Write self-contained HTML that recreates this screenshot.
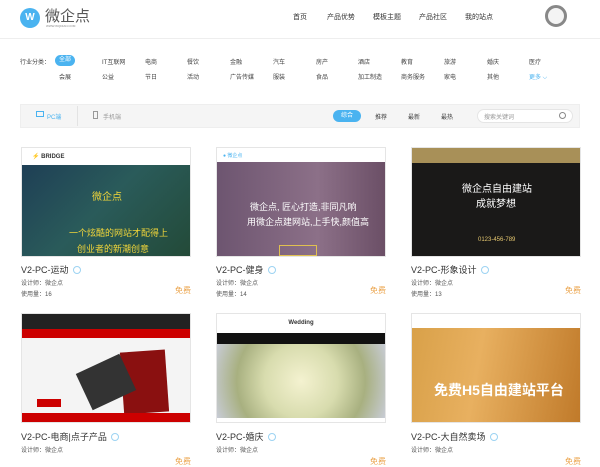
<!DOCTYPE html>
<html><head><meta charset="utf-8"><style>
*{margin:0;padding:0;box-sizing:border-box}
body{width:600px;height:454px;overflow:hidden;background:#fff;font-family:"Liberation Sans","Noto Sans CJK SC",sans-serif;color:#333;position:relative}
.a{position:absolute;white-space:nowrap}
.nav{font-size:7px;color:#333;top:12px}
.cat{font-size:6px;color:#444}
.card{position:absolute;width:170px}
.img{position:absolute;left:0;width:170px;height:110px;overflow:hidden;border:1px solid #e5e5e5}
.t{position:absolute;left:0;font-size:9px;color:#333}
.t i{display:inline-block;width:8px;height:8px;border-radius:50%;border:1px solid #9cd3f2;margin-left:4px;vertical-align:-1px}
.s{position:absolute;left:0;font-size:6px;color:#555}
.f{position:absolute;right:0;font-size:8px;color:#eba34a}
</style></head><body>
<!-- header -->
<div class="a" style="left:20px;top:8px;width:20px;height:20px;border-radius:50%;background:#4ab3f0;color:#fff;font-size:10px;font-weight:bold;text-align:center;line-height:20px">W</div>
<div class="a" style="left:45px;top:5px;font-size:15px;color:#555">微企点</div>
<div class="a" style="left:46px;top:24px;font-size:3px;color:#888">WWW.WQDIAN.COM</div>
<div class="a nav" style="left:293px">首页</div>
<div class="a nav" style="left:327px">产品优势</div>
<div class="a nav" style="left:373px">模板主题</div>
<div class="a nav" style="left:419px">产品社区</div>
<div class="a nav" style="left:465px">我的站点</div>
<div class="a" style="left:545px;top:5px;width:22px;height:22px;border-radius:50%;border:3px solid #888;background:#f4f4f4"></div>
<div class="a" style="left:0;top:38px;width:600px;height:1px;background:#eee"></div>
<!-- categories -->
<div class="a cat" style="left:20px;top:57px">行业分类：</div>
<div class="a cat" style="left:55px;top:55px;width:20px;height:11px;border-radius:6px;background:#4ab3f0;color:#fff;text-align:center;line-height:11px">全部</div>
<div class="a cat" style="left:102px;top:57px">IT互联网</div>
<div class="a cat" style="left:145px;top:57px">电商</div>
<div class="a cat" style="left:187px;top:57px">餐饮</div>
<div class="a cat" style="left:230px;top:57px">金融</div>
<div class="a cat" style="left:273px;top:57px">汽车</div>
<div class="a cat" style="left:316px;top:57px">房产</div>
<div class="a cat" style="left:358px;top:57px">酒店</div>
<div class="a cat" style="left:401px;top:57px">教育</div>
<div class="a cat" style="left:444px;top:57px">旅游</div>
<div class="a cat" style="left:487px;top:57px">婚庆</div>
<div class="a cat" style="left:529px;top:57px">医疗</div>
<div class="a cat" style="left:59px;top:72px">会展</div>
<div class="a cat" style="left:102px;top:72px">公益</div>
<div class="a cat" style="left:145px;top:72px">节日</div>
<div class="a cat" style="left:187px;top:72px">活动</div>
<div class="a cat" style="left:230px;top:72px">广告传媒</div>
<div class="a cat" style="left:273px;top:72px">服装</div>
<div class="a cat" style="left:316px;top:72px">食品</div>
<div class="a cat" style="left:358px;top:72px">加工制造</div>
<div class="a cat" style="left:401px;top:72px">商务服务</div>
<div class="a cat" style="left:444px;top:72px">家电</div>
<div class="a cat" style="left:487px;top:72px">其他</div>
<div class="a cat" style="left:529px;top:72px;color:#4ab3f0">更多 ⌵</div>
<!-- toolbar -->
<div class="a" style="left:20px;top:104px;width:560px;height:24px;background:#f5f5f5;border:1px solid #eee"></div>
<div class="a" style="left:36px;top:111px;width:8px;height:6px;border:1px solid #4ab3f0"></div>
<div class="a cat" style="left:47px;top:112px;color:#4ab3f0">PC端</div>
<div class="a" style="left:77px;top:106px;width:1px;height:20px;background:#e3e3e3"></div>
<div class="a" style="left:93px;top:111px;width:5px;height:8px;border:1px solid #999"></div>
<div class="a cat" style="left:103px;top:112px;color:#999">手机端</div>
<div class="a cat" style="left:333px;top:110px;width:28px;height:12px;border-radius:6px;background:#4ab3f0;color:#fff;text-align:center;line-height:12px">综合</div>
<div class="a cat" style="left:375px;top:112px">推荐</div>
<div class="a cat" style="left:408px;top:112px">最新</div>
<div class="a cat" style="left:441px;top:112px">最热</div>
<div class="a" style="left:477px;top:109px;width:96px;height:14px;border-radius:7px;background:#fff;border:1px solid #e5e5e5"></div>
<div class="a cat" style="left:484px;top:112px;color:#999">搜索关键词</div>
<div class="a" style="left:559px;top:112px;width:7px;height:7px;border-radius:50%;border:1px solid #888"></div>
<!-- row1 -->
<div class="card" style="left:21px;top:147px">
 <div class="img" style="top:0;background:linear-gradient(135deg,#1d3b55,#2a5b5a 50%,#234a38)"><div style="height:17px;background:#fff;font-size:6px;padding:5px 10px;font-weight:bold">⚡ BRIDGE</div>
 <div class="a" style="left:70px;top:40px;font-size:10px;color:#f0d53a">微企点</div><div class="a" style="left:47px;top:78px;font-size:9px;color:#f0d53a">一个炫酷的网站才配得上</div><div class="a" style="left:55px;top:94px;font-size:9px;color:#f0d53a">创业者的新潮创意</div></div>
 <div class="t" style="top:116px">V2-PC-运动<i></i></div><div class="s" style="top:131px">设计师：微企点</div><div class="s" style="top:142px">使用量：16</div><div class="f" style="top:138px">免费</div>
</div>
<div class="card" style="left:216px;top:147px">
 <div class="img" style="top:0;background:linear-gradient(90deg,#6d5570,#8c7088 60%,#6b4f66)"><div style="height:14px;background:#fff;font-size:5px;padding:4px 6px;color:#4ab3f0">● 微企点</div>
 <div class="a" style="left:33px;top:52px;font-size:9px;color:#fff">微企点, 匠心打造,非同凡响</div><div class="a" style="left:30px;top:67px;font-size:9px;color:#fff">用微企点建网站,上手快,颜值高</div><div class="a" style="left:62px;top:97px;width:38px;height:11px;border:1px solid #e0c050"></div></div>
 <div class="t" style="top:116px">V2-PC-健身<i></i></div><div class="s" style="top:131px">设计师：微企点</div><div class="s" style="top:142px">使用量：14</div><div class="f" style="top:138px">免费</div>
</div>
<div class="card" style="left:411px;top:147px">
 <div class="img" style="top:0;background:#1a1918"><div style="height:15px;background:#a89058"></div>
 <div class="a" style="left:50px;top:32px;font-size:10px;color:#fff">微企点自由建站</div><div class="a" style="left:64px;top:47px;font-size:10px;color:#fff">成就梦想</div><div class="a" style="left:66px;top:89px;font-size:6px;color:#e6c870">0123-456-789</div></div>
 <div class="t" style="top:116px">V2-PC-形象设计<i></i></div><div class="s" style="top:131px">设计师：微企点</div><div class="s" style="top:142px">使用量：13</div><div class="f" style="top:138px">免费</div>
</div>
<!-- row2 -->
<div class="card" style="left:21px;top:313px">
 <div class="img" style="top:0;background:#f4f4f4"><div style="height:15px;background:#222"></div><div style="height:9px;background:#c00"></div>
 <div class="a" style="left:100px;top:37px;width:45px;height:62px;background:#8a1010;transform:rotate(-4deg)"></div><div class="a" style="left:60px;top:48px;width:48px;height:40px;background:#333;transform:rotate(-25deg)"></div><div class="a" style="left:15px;top:85px;width:24px;height:8px;background:#c00"></div><div class="a" style="left:0;top:99px;width:170px;height:11px;background:#c00"></div></div>
 <div class="t" style="top:117px">V2-PC-电商|点子产品<i></i></div><div class="s" style="top:132px">设计师：微企点</div><div class="f" style="top:143px">免费</div>
</div>
<div class="card" style="left:216px;top:313px">
 <div class="img" style="top:0;background:#fff"><div style="height:19px;font-size:6px;font-weight:bold;text-align:center;line-height:19px">Wedding</div><div style="height:11px;background:#111"></div>
 <div style="height:74px;background:radial-gradient(circle at 50% 50%,#f4f2d0,#d8dcae 40%,#a8b080 70%,#c8ccd6)"></div></div>
 <div class="t" style="top:117px">V2-PC-婚庆<i></i></div><div class="s" style="top:132px">设计师：微企点</div><div class="f" style="top:143px">免费</div>
</div>
<div class="card" style="left:411px;top:313px">
 <div class="img" style="top:0;background:linear-gradient(100deg,#d8a048,#e8b060 40%,#c07a2a)"><div style="height:14px;background:#fff"></div>
 <div class="a" style="left:22px;top:66px;font-size:14px;font-weight:bold;color:#fff">免费H5自由建站平台</div></div>
 <div class="t" style="top:117px">V2-PC-大自然卖场<i></i></div><div class="s" style="top:132px">设计师：微企点</div><div class="f" style="top:143px">免费</div>
</div>
</body></html>
